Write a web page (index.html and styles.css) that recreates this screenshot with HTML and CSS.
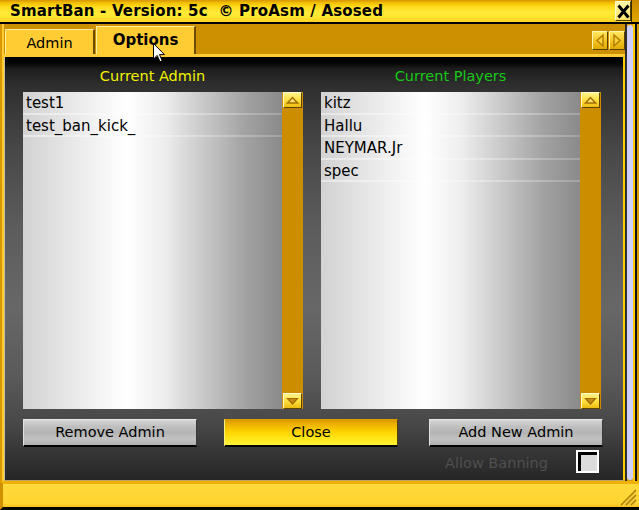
FILE: index.html
```html
<!DOCTYPE html>
<html>
<head>
<meta charset="utf-8">
<link rel="stylesheet" href="styles.css">
</head>
<body>
<div class="window">
  <div class="titlebar">
    <span class="title">SmartBan - Version: 5c&nbsp; © ProAsm / Asosed</span>
    <span class="closebtn"><svg width="13" height="15" viewBox="0 0 13 15"><path d="M1.5 1.5 L11.5 13.5 M11.5 1.5 L1.5 13.5" stroke="#000" stroke-width="3" fill="none"/></svg></span>
    <span class="title-end"></span>
  </div>
  <div class="body">
    <div class="frame-left"></div>
    <div class="main">
      <div class="tabstrip">
        <div class="tab">Admin</div>
        <div class="tab active">Options</div>
        <div class="tabarrows">
          <span class="tarrow"><svg width="14" height="17" viewBox="0 0 14 17"><polygon points="10,3 4,8.5 10,14" fill="#f7d23a" stroke="#b07a00" stroke-width="1.4"/></svg></span>
          <span class="tarrow"><svg width="14" height="17" viewBox="0 0 14 17"><polygon points="4,3 10,8.5 4,14" fill="#f7d23a" stroke="#b07a00" stroke-width="1.4"/></svg></span>
        </div>
      </div>
      <div class="panel">
        <div class="columns">
          <div class="col">
            <div class="label admin">Current Admin</div>
            <div class="listwrap">
              <div class="list">
                <div class="row">test1</div>
                <div class="row">test_ban_kick_</div>
              </div>
              <div class="scroll">
                <div class="sbtn"><svg width="17" height="14" viewBox="0 0 17 14"><polygon points="3.5,10 8.5,4.5 13.5,10" fill="#ffe270" stroke="#a06c00" stroke-width="1.5"/></svg></div>
                <div class="track"></div>
                <div class="sbtn"><svg width="17" height="14" viewBox="0 0 17 14"><polygon points="3.5,4.5 13.5,4.5 8.5,10" fill="#c48c10" stroke="#a06c00" stroke-width="1.2"/></svg></div>
              </div>
            </div>
          </div>
          <div class="col">
            <div class="label players">Current Players</div>
            <div class="listwrap">
              <div class="list">
                <div class="row">kitz</div>
                <div class="row">Hallu</div>
                <div class="row">NEYMAR.Jr</div>
                <div class="row">spec</div>
              </div>
              <div class="scroll">
                <div class="sbtn"><svg width="17" height="14" viewBox="0 0 17 14"><polygon points="3.5,10 8.5,4.5 13.5,10" fill="#ffe270" stroke="#a06c00" stroke-width="1.5"/></svg></div>
                <div class="track"></div>
                <div class="sbtn"><svg width="17" height="14" viewBox="0 0 17 14"><polygon points="3.5,4.5 13.5,4.5 8.5,10" fill="#c48c10" stroke="#a06c00" stroke-width="1.2"/></svg></div>
              </div>
            </div>
          </div>
        </div>
        <div class="buttons">
          <div class="btn gray">Remove Admin</div>
          <div class="btn yellow close">Close</div>
          <div class="btn gray add">Add New Admin</div>
        </div>
        <div class="optrow">
          <span class="optlabel">Allow Banning</span>
          <span class="check"></span>
        </div>
      </div>
    </div>
    <div class="frame-right"><div class="lav"></div></div>
  </div>
  <div class="status">
    <svg class="grip" width="17" height="17" viewBox="0 0 17 17"><polygon points="16,1 16,16 1,16" fill="#f0c838"/><path d="M1 16 L16 1 M6 16 L16 6 M11 16 L16 11" stroke="#a87800" stroke-width="1.3"/></svg>
  </div>
  <svg class="cursor" width="13" height="20" viewBox="0 0 13 20"><path d="M0.5 0.5 L0.5 16 L4.2 12.4 L7 18.8 L9.2 17.8 L6.5 11.6 L11.5 11.6 Z" fill="#fff" stroke="#000" stroke-width="1"/></svg>
</div>
</body>
</html>
```

FILE: styles.css
```css
* { box-sizing: border-box; margin: 0; padding: 0; }
html, body { width: 639px; height: 510px; overflow: hidden; background: #000; }
body { font-family: "DejaVu Sans", Verdana, sans-serif; font-size: 14px; color: #000; }

.window { position: relative; width: 639px; height: 510px; display: flex; flex-direction: column; background: #d89c00; }

.titlebar {
  height: 24px; display: flex; border-bottom: 2px solid #000;
  background: linear-gradient(#d69500 0, #f2c000 3px, #ffdc20 7px, #ffeb3a 13px, #ffe22c 18px, #ffd21e 22px);
}
.title { flex: 1; padding: 1px 0 0 10px; font-weight: bold; font-size: 15px; letter-spacing: 0.17px; line-height: 21px; white-space: nowrap; }
.closebtn {
  width: 16px; height: 20px; margin-top: 1px;
  background: linear-gradient(#fff6a8, #ffe566);
  border: 1px solid; border-color: #fffbd0 #5a4000 #5a4000 #fffbd0;
  display: flex; align-items: center; justify-content: center;
}
.title-end { width: 8px; background: linear-gradient(#c98800, #e0a800); border-left: 1px solid #3a2a00; }

.body { display: flex; height: 457px; }
.frame-left { width: 4px; background: linear-gradient(to right, #d89800 0, #d89800 2px, #ffcc33 2px); }
.main { width: 621px; display: flex; flex-direction: column; }

.tabstrip {
  height: 33px; background: #cc9000; border-bottom: 3px solid #ffcc33;
  display: flex; align-items: flex-end; padding-left: 1px;
}
.tab {
  width: 90px; height: 25px; padding-top: 3px; line-height: 20px; text-align: center;
  font-size: 14.5px; background: #ffcc33;
  border-top: 1px solid #fff0a0; border-left: 1px solid #fff0a0; border-right: 2px solid #6e4c00;
}
.tab.active { width: 100px; height: 28px; margin-left: 1px; font-weight: bold; font-size: 15px; padding-top: 3px; }
.tabarrows { margin-left: auto; align-self: flex-start; margin-top: 7px; display: flex; gap: 1px; }
.tarrow {
  width: 16px; height: 19px; display: flex; align-items: center; justify-content: center;
  background: linear-gradient(#ffe860, #f0c020 60%, #e0aa00);
  border: 1px solid; border-color: #fff4b0 #5a4000 #5a4000 #fff4b0;
}

.panel {
  height: 424px; padding: 9px 0 0 18px;
  border-left: 1px solid #c8c090; border-right: 2px solid #ffcc00; border-bottom: 1px solid #b8a860;
  background: linear-gradient(#000 0, #000 5px, #1e1e1e 12px, #2e2e2e 28px, #474747 90px, #5c5c5c 170px, #676767 250px, #5a5a5a 320px, #464646 370px, #333 400px, #262626 423px);
}
.columns { display: flex; gap: 18px; }
.col { width: 280px; }
.label { width: 259px; height: 20px; line-height: 20px; margin-bottom: 6px; text-align: center; font-size: 14.5px; }
.label.admin { color: #f2f200; }
.label.players { color: #18c818; }

.listwrap { display: flex; height: 317px; }
.list {
  width: 259px;
  background: linear-gradient(to right, #d2d2d2 0%, #f0f0f0 26%, #fff 40%, #eeeeee 54%, #c8c8c8 70%, #a2a2a2 86%, #8a8a8a 100%);
}
.row {
  height: 22.5px; line-height: 22px; padding-left: 3px; font-size: 15px; white-space: nowrap;
  background: linear-gradient(to right, rgba(255,255,255,.45), rgba(255,255,255,.2)) left bottom / 100% 2px no-repeat;
}
.scroll { width: 21px; background: #cc8e00; display: flex; flex-direction: column; align-items: center; }
.sbtn {
  width: 19px; height: 16px; display: flex; align-items: center; justify-content: center;
  background: linear-gradient(#fff28a, #ffe040 50%, #ecbc10);
  border: 1px solid; border-color: #fff8c8 #5e4400 #5e4400 #fff8c8;
}
.track { flex: 1; }

.buttons { display: flex; height: 28px; margin-top: 10px; }
.btn {
  width: 174px; height: 28px; line-height: 25px; text-align: center; font-size: 14.5px;
  border-style: solid; border-width: 1px 1px 2px 1px;
}
.btn.gray {
  background: linear-gradient(#d6d6d6, #c0c0c0 25%, #b4b4b4 50%, #c2c2c2 75%, #b0b0b0);
  border-color: #e8e8e8 #3a3a3a #000 #e0e0e0;
}
.btn.yellow {
  background: linear-gradient(#d99800 0, #eeb200 18%, #ffd400 48%, #ffe81e 78%, #fff23a 100%);
  border-color: #e0a000 #5a4000 #000 #fff080;
}
.btn.close { margin-left: 27px; }
.btn.add { margin-left: 31px; }

.optrow { display: flex; justify-content: flex-end; align-items: center; margin-top: 3px; padding-right: 24px; }
.optlabel { color: #4f4f4f; font-size: 14.5px; line-height: 20px; margin-right: 28px; padding-top: 3px; }
.check { width: 23px; height: 23px; border: 2px solid #fff; background: #dcdcdc; box-shadow: inset 3px 3px 0 #000; }

.frame-right {
  width: 14px; display: flex;
  background: linear-gradient(to right, #2e2e2e 0, #2e2e2e 2px, #d89c00 2px, #d89c00 8px, #ffcc00 8px, #ffcc00 10px, #111 10px, #111 12px, #d89c00 12px);
}
.lav { width: 6px; margin: 1px 0 1px 2px; background: #d0d0ff; border-radius: 3px; }

.status {
  height: 29px; display: flex; justify-content: flex-end; align-items: flex-end;
  border-top: 3px solid #f0b000; border-bottom: 3px solid #000; border-left: 3px solid #d09000;
  background: linear-gradient(#ffda3c, #ffd430 85%, #f4c020);
}
.grip { margin: 0 2px 1px 0; }

.cursor { position: absolute; left: 153px; top: 43px; }
```
